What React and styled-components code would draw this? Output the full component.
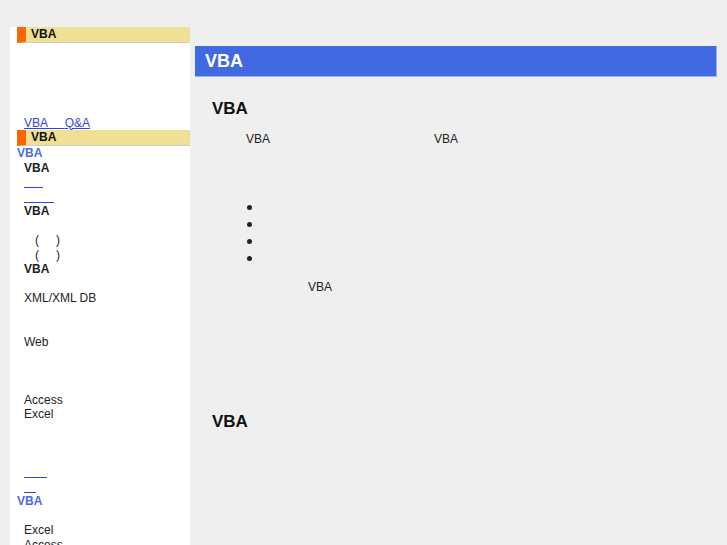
import React from "react";
import styled, { createGlobalStyle } from "styled-components";

const Global = createGlobalStyle`
  html, body { margin: 0; padding: 0; background: #efefef; }
  body { font-family: "Liberation Sans", Arial, "Noto Sans CJK JP", sans-serif; font-size: 12px; color: #222; }
`;

const Page = styled.div`
  display: flex;
  align-items: flex-start;
  padding: 27px 10px 0 10px;
  min-height: 545px;
  box-sizing: border-box;
`;

const Sidebar = styled.aside`
  width: 180px;
  flex: none;
  background: #fff;
  padding-left: 7px;
  box-sizing: border-box;
  min-height: 518px;
`;

const SideHeader = styled.div`
  height: 15px;
  line-height: 15px;
  background: #f0e096;
  border-left: 9px solid #ff6600;
  border-bottom: 1px solid #cfcfc0;
  padding-left: 5px;
  font-weight: bold;
  font-size: 12px;
  color: #111;
`;

const Row = styled.div`
  height: 14.5px;
  line-height: 14.5px;
  white-space: pre;
  padding-left: ${(p) => (p.$flush ? 0 : 7)}px;
  font-weight: ${(p) => (p.$bold ? "bold" : "normal")};
  color: ${(p) => (p.$accent ? "#4a6ae0" : "#222")};
`;

const Link = styled.a`
  color: #3344dd;
  text-decoration: underline;
  cursor: pointer;
`;

const EmptyLink = styled.a`
  display: inline-block;
  width: ${(p) => p.$w}px;
  height: 10px;
  border-bottom: 1px solid #3344dd;
  vertical-align: -2px;
  cursor: pointer;
`;

const Gap = styled.span`
  display: inline-block;
  width: ${(p) => p.$w}px;
`;

const Main = styled.main`
  flex: 1;
  margin-left: 5px;
  padding-top: 19px;
`;

const TitleBar = styled.h1`
  margin: 0;
  height: 30px;
  line-height: 30px;
  background: #4169e1;
  border-bottom: 1px solid #9db0f0;
  border-right: 1px solid #9db0f0;
  color: #fff;
  font-size: 18px;
  font-weight: bold;
  padding-left: 10px;
`;

const Section = styled.section`
  padding-left: 17px;
`;

const Heading = styled.h2`
  margin: 0;
  font-size: 17px;
  line-height: 20px;
  font-weight: bold;
  color: #111;
  margin-top: ${(p) => p.$top}px;
`;

const Para = styled.p`
  margin: ${(p) => p.$top}px 0 0;
  line-height: 17px;
  white-space: pre;
`;

const Bullets = styled.ul`
  margin: 51px 0 0;
  padding-left: 52px;
  list-style: disc;
  font-size: 17px;
  line-height: 17px;
`;

const Item = styled.li`
  height: 17px;
`;

export default function App() {
  return (
    <>
      <Global />
      <Page>
        <Sidebar>
          <SideHeader>VBA</SideHeader>
          <Row />
          <Row />
          <Row />
          <Row />
          <Row />
          <Row>
            <Link>VBA{"\u00a0\u00a0\u00a0\u00a0\u00a0"}Q&amp;A</Link>
          </Row>
          <SideHeader>VBA</SideHeader>
          <Row $flush $bold $accent>VBA</Row>
          <Row $bold>VBA</Row>
          <Row><EmptyLink $w={19} /></Row>
          <Row><EmptyLink $w={30} /></Row>
          <Row $bold>VBA</Row>
          <Row />
          <Row><Gap $w={11} />(<Gap $w={17} />)</Row>
          <Row><Gap $w={11} />(<Gap $w={17} />)</Row>
          <Row $bold>VBA</Row>
          <Row />
          <Row>XML/XML DB</Row>
          <Row />
          <Row />
          <Row>Web</Row>
          <Row />
          <Row />
          <Row />
          <Row>Access</Row>
          <Row>Excel</Row>
          <Row />
          <Row />
          <Row />
          <Row><EmptyLink $w={23} /></Row>
          <Row><EmptyLink $w={12} /></Row>
          <Row $flush $bold $accent>VBA</Row>
          <Row />
          <Row>Excel</Row>
          <Row>Access</Row>
        </Sidebar>
        <Main>
          <TitleBar>VBA</TitleBar>
          <Section>
            <Heading $top={22}>VBA</Heading>
            <Para $top={12}>
              <Gap $w={34} />VBA<Gap $w={164} />VBA
            </Para>
            <Bullets>
              <Item />
              <Item />
              <Item />
              <Item />
            </Bullets>
            <Para $top={12}>
              <Gap $w={96} />VBA
            </Para>
            <Heading $top={116}>VBA</Heading>
          </Section>
        </Main>
      </Page>
    </>
  );
}
